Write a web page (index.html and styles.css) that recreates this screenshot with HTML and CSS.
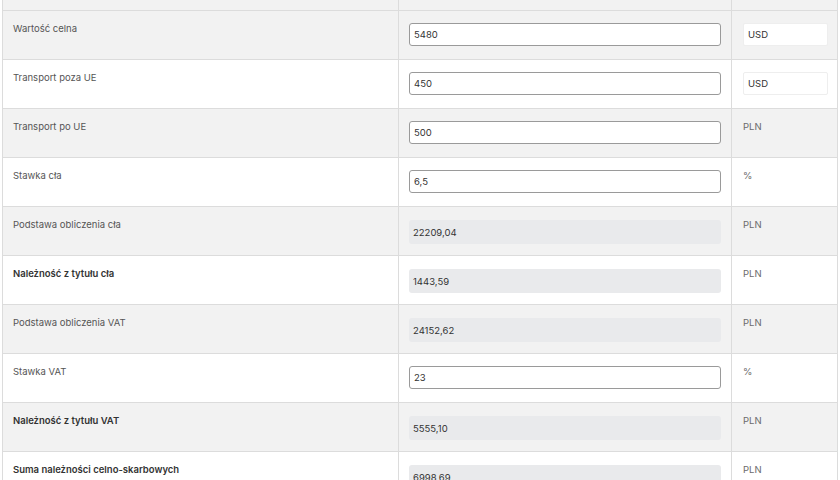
FILE: index.html
```html
<!DOCTYPE html>
<html lang="pl">
<head>
    <meta charset="UTF-8">
    <meta name="viewport" content="width=device-width, initial-scale=1.0">
    <title>Kalkulator cła</title>
    <link rel="stylesheet" href="styles.css">
</head>
<body>
    <table class="calc">
        <thead>
            <tr>
                <th class="col-label"></th>
                <th class="col-value"></th>
                <th class="col-unit"></th>
            </tr>
        </thead>
        <tbody>
            <tr>
                <td>Wartość celna</td>
                <td class="value"><input type="text" value="5480"></td>
                <td class="unit"><input type="text" class="currency" value="USD"></td>
            </tr>
            <tr>
                <td>Transport poza UE</td>
                <td class="value"><input type="text" value="450"></td>
                <td class="unit"><input type="text" class="currency" value="USD"></td>
            </tr>
            <tr>
                <td>Transport po UE</td>
                <td class="value"><input type="text" value="500"></td>
                <td class="unit">PLN</td>
            </tr>
            <tr>
                <td>Stawka cła</td>
                <td class="value"><input type="text" value="6,5"></td>
                <td class="unit">%</td>
            </tr>
            <tr>
                <td>Podstawa obliczenia cła</td>
                <td class="value"><input type="text" class="result" value="22209,04" readonly></td>
                <td class="unit">PLN</td>
            </tr>
            <tr>
                <td class="strong">Należność z tytułu cła</td>
                <td class="value"><input type="text" class="result" value="1443,59" readonly></td>
                <td class="unit">PLN</td>
            </tr>
            <tr>
                <td>Podstawa obliczenia VAT</td>
                <td class="value"><input type="text" class="result" value="24152,62" readonly></td>
                <td class="unit">PLN</td>
            </tr>
            <tr>
                <td>Stawka VAT</td>
                <td class="value"><input type="text" value="23"></td>
                <td class="unit">%</td>
            </tr>
            <tr>
                <td class="strong">Należność z tytułu VAT</td>
                <td class="value"><input type="text" class="result" value="5555,10" readonly></td>
                <td class="unit">PLN</td>
            </tr>
            <tr>
                <td class="strong">Suma należności celno-skarbowych</td>
                <td class="value"><input type="text" class="result" value="6998,69" readonly></td>
                <td class="unit">PLN</td>
            </tr>
        </tbody>
    </table>
</body>
</html>
```

FILE: styles.css
```css
body {
    margin: 0;
    padding: 0;
    background-color: #fff;
    font-family: Inter, "Noto Sans", sans-serif;
    font-size: 9.5px;
    color: #555;
}

.calc {
    margin-left: 2px;
    width: 836px;
    border-collapse: collapse;
    table-layout: fixed;
}

.calc th, .calc td {
    border: 1px solid #dcdcdc;
    text-align: left;
    vertical-align: top;
}

.calc thead th {
    height: 10px;
    padding: 0;
    border-top: none;
    background-color: #f2f2f2;
}

.col-label {
    width: 395px;
}

.col-value {
    width: 332px;
}

.calc td {
    height: 49px;
    box-sizing: border-box;
    padding: 12px 10px 0 10px;
    line-height: 12px;
}

.calc tbody tr:nth-child(odd) {
    background-color: #f2f2f2;
}

.calc tbody tr:nth-child(even) {
    background-color: #fff;
}

.calc td.strong {
    font-weight: 600;
    color: #333;
}

.calc td.value {
    padding-top: 12px;
}

.calc td.unit {
    padding-left: 11px;
    color: #6b6b6b;
}

input {
    display: block;
    box-sizing: border-box;
    width: 100%;
    height: 23px;
    margin: 0;
    padding: 0 4px;
    font-family: Inter, "Noto Sans", sans-serif;
    font-size: 9.5px;
    color: #333;
    background-color: #fff;
    border: 1px solid #9a9a9a;
    border-radius: 3px;
}

input.result {
    height: 24px;
    margin-top: 1px;
    border: none;
    padding-left: 4px;
    background-color: #e9eaec;
}

input.currency {
    width: 85px;
    border: 1px solid #eeeeee;
    border-radius: 2px;
}
```
